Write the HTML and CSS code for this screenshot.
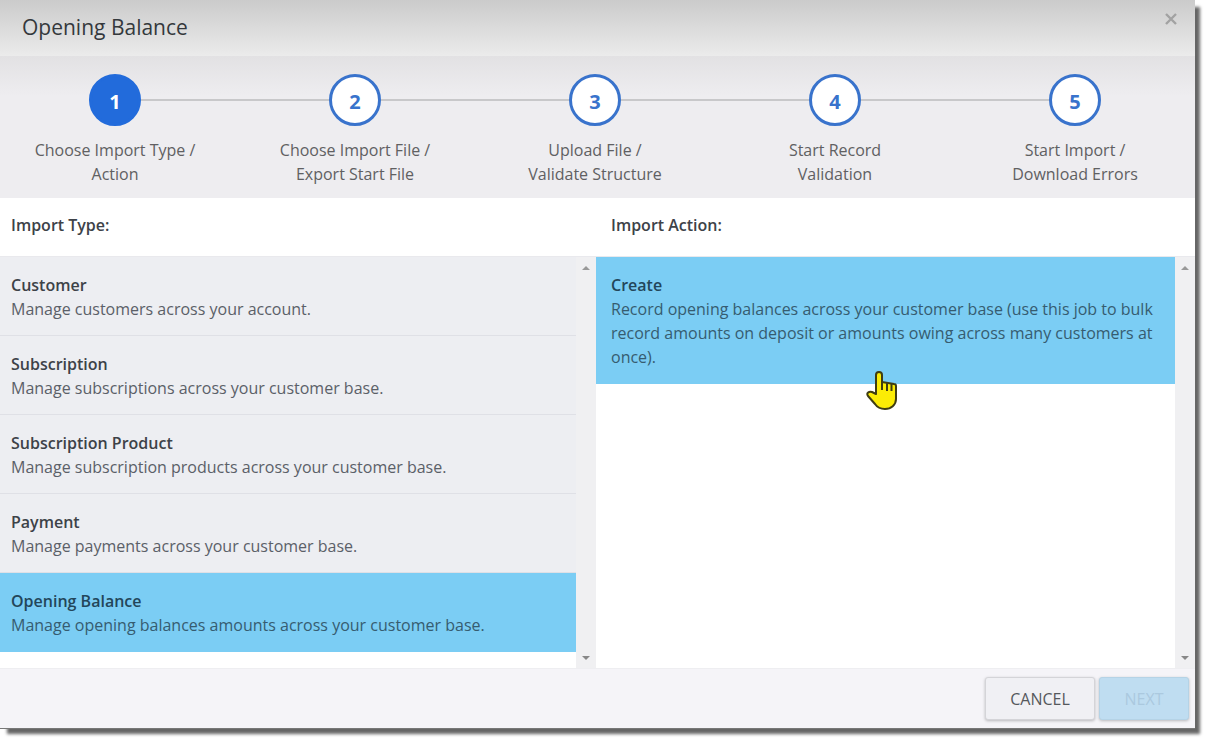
FILE: index.html
```html
<!DOCTYPE html>
<html lang="en">
    <head>
        <meta charset="UTF-8">
        <title>Opening Balance</title>
        <link rel="stylesheet" href="styles.css">
    </head>
    <body>
    <div class="modal" role="dialog" aria-labelledby="modal-title">
        <div class="modal-head">
            <h1 id="modal-title">Opening Balance</h1>
            <button type="button" class="btn-close" aria-label="Close">
                <svg width="12" height="12" viewBox="0 0 12 12"><path d="M1 1l10 10M11 1l-10 10" fill="none" stroke="#a2a2a2" stroke-width="2.4"/></svg>
            </button>
        </div>
        <ol class="steps">
            <li class="step active">
                <span class="step-num">1</span>
                <span class="step-text">Choose Import Type /<br>Action</span>
            </li>
            <li class="step">
                <span class="step-num">2</span>
                <span class="step-text">Choose Import File /<br>Export Start File</span>
            </li>
            <li class="step">
                <span class="step-num">3</span>
                <span class="step-text">Upload File /<br>Validate Structure</span>
            </li>
            <li class="step">
                <span class="step-num">4</span>
                <span class="step-text">Start Record<br>Validation</span>
            </li>
            <li class="step">
                <span class="step-num">5</span>
                <span class="step-text">Start Import /<br>Download Errors</span>
            </li>
        </ol>
        <div class="columns">
            <section class="column">
                <h2>Import Type:</h2>
                <div class="list-box">
                    <div class="list">
                        <button type="button" class="item">
                            <strong>Customer</strong>
                            <span>Manage customers across your account.</span>
                        </button>
                        <button type="button" class="item">
                            <strong>Subscription</strong>
                            <span>Manage subscriptions across your customer base.</span>
                        </button>
                        <button type="button" class="item">
                            <strong>Subscription Product</strong>
                            <span>Manage subscription products across your customer base.</span>
                        </button>
                        <button type="button" class="item">
                            <strong>Payment</strong>
                            <span>Manage payments across your customer base.</span>
                        </button>
                        <button type="button" class="item selected">
                            <strong>Opening Balance</strong>
                            <span>Manage opening balances amounts across your customer base.</span>
                        </button>
                    </div>
                    <div class="scrollbar">
                        <svg width="8" height="4" viewBox="0 0 8 4"><path d="M0 4L4 0l4 4z" fill="#999"/></svg>
                        <svg width="8" height="4" viewBox="0 0 8 4"><path d="M0 0l4 4 4-4z" fill="#888"/></svg>
                    </div>
                </div>
            </section>
            <section class="column">
                <h2>Import Action:</h2>
                <div class="list-box">
                    <div class="list">
                        <button type="button" class="item selected">
                            <strong>Create</strong>
                            <span>Record opening balances across your customer base (use this job to bulk record amounts on deposit or amounts owing across many customers at once).</span>
                        </button>
                    </div>
                    <div class="scrollbar">
                        <svg width="8" height="4" viewBox="0 0 8 4"><path d="M0 4L4 0l4 4z" fill="#999"/></svg>
                        <svg width="8" height="4" viewBox="0 0 8 4"><path d="M0 0l4 4 4-4z" fill="#888"/></svg>
                    </div>
                    <svg class="pointer" width="32" height="40" viewBox="0 0 32 40">
                        <path d="M10 23V4c0-4 6-4 6 0v7l12 2c1 0 2 1 2 2v13c0 6-5 10-11 10-5 0-8-2-10-5L2 25c-2-3 1-5 4-4z" fill="#fbec05" stroke="#3f3d12" stroke-width="2" stroke-linejoin="round"/>
                        <path d="M16 11v8M21 12v8M25.500 13v7" fill="none" stroke="#3f3d12" stroke-width="2"/>
                    </svg>
                </div>
            </section>
        </div>
        <div class="modal-foot">
            <button type="button" class="btn">CANCEL</button>
            <button type="button" class="btn btn-next" disabled>NEXT</button>
        </div>
    </div>
    </body>
</html>
```
FILE: styles.css
```css
* {
    box-sizing: border-box;
}
body {
    margin: 0;
    padding: 0 15px 15px 0;
    background: #fff;
    color: #3d4248;
    font: 16px/24px "Open Sans", "Noto Sans", sans-serif;
}
button {
    margin: 0;
    font: inherit;
    color: inherit;
}
h1, h2, ol {
    margin: 0;
    padding: 0;
}
.modal {
    display: flex;
    flex-direction: column;
    min-height: calc(100vh - 15px);
    border-bottom: 1px solid #777;
    background: linear-gradient(#cbcbcb, #ebebeb 56px, #fff 56px);
    box-shadow: 6px 6px 3px -1px rgba(0, 0, 0, 0.6);
}
.modal-head {
    display: flex;
    justify-content: space-between;
    align-items: flex-start;
    height: 56px;
    padding: 12px 18px 0 22px;
}
.modal-head h1 {
    font-size: 21px;
    line-height: 30px;
    font-weight: 500;
    color: #34383c;
}
.btn-close {
    display: flex;
    padding: 1px 0;
    border: none;
    background: none;
}

/* steps */
.steps {
    display: grid;
    grid-template-columns: repeat(5, 1fr);
    height: 142px;
    padding-top: 18px;
    margin-left: -5px;
    list-style: none;
    background: linear-gradient(#e2e1e3, #eeedf0 40px);
    clip-path: inset(0 0 0 5px);
}
.step {
    position: relative;
    text-align: center;
    color: #606062;
}
.step:not(:first-child)::before {
    content: "";
    position: absolute;
    top: 25px;
    right: 50%;
    width: 100%;
    height: 2px;
    background: #c8c8ca;
}
.step-num {
    display: block;
    position: relative;
    z-index: 1;
    width: 52px;
    height: 52px;
    margin: 0 auto 12px;
    border: 3px solid #3973cc;
    border-radius: 50%;
    background: #fff;
    color: #3973cc;
    font-size: 20px;
    font-weight: 700;
    line-height: 50px;
}
.active .step-num {
    border-color: #226bdb;
    background: #226bdb;
    color: #fff;
}
.step-text {
    display: block;
}

/* lists */
.columns {
    display: grid;
    grid-template-columns: 596fr 599fr;
    flex: 1;
}
.column {
    display: flex;
    flex-direction: column;
}
.column h2 {
    height: 58px;
    padding: 15px 11px 0;
    font-size: 16px;
    line-height: 24px;
    font-weight: 600;
}
.column + .column h2 {
    padding-left: 15px;
}
.list-box {
    display: flex;
    flex: 1;
    position: relative;
    border-top: 1px solid #e9e9ed;
}
.list {
    flex: 1;
}
.item {
    display: block;
    width: 100%;
    padding: 16px 11px 14px;
    border: none;
    border-bottom: 1px solid #dfe0e6;
    background: #edeef2;
    text-align: left;
}
.item strong, .item span {
    display: block;
}
.item strong {
    font-weight: 600;
}
.item span {
    color: #5b6068;
}
.item.selected {
    border-bottom-color: #7bcdf4;
    background: #7bcdf4;
    color: #23465a;
}
.item.selected span {
    color: #365c70;
}
.column + .column .item {
    padding-left: 15px;
}
.scrollbar {
    display: flex;
    flex-direction: column;
    justify-content: space-between;
    align-items: center;
    width: 20px;
    padding: 9px 0 8px;
    background: #f0f0f2;
}
.pointer {
    position: absolute;
    top: 114px;
    left: 270px;
}

/* foot */
.modal-foot {
    display: flex;
    justify-content: flex-end;
    gap: 4px;
    height: 60px;
    padding: 8px 6px 0;
    border-top: 1px solid #eeeef1;
    background: #f5f4f8;
}
.btn {
    width: 110px;
    height: 43px;
    padding: 0;
    border: 1px solid #d4d4d8;
    border-radius: 3px;
    background: #f0f0f4;
    box-shadow: 0 1px 3px rgba(0, 0, 0, 0.25);
    color: #55585c;
}
.btn-next {
    width: 90px;
    border-color: #b5d3e6;
    background: #bfddf1;
    color: #abc9df;
}
```
